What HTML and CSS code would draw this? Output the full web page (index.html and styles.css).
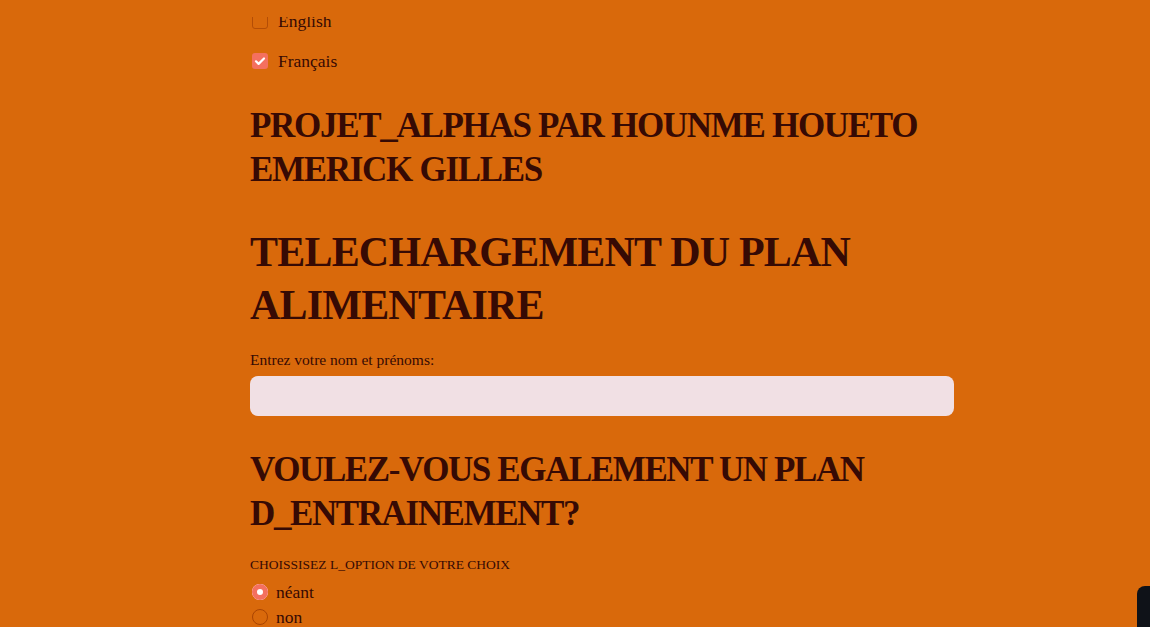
FILE: index.html
```html
<!DOCTYPE html>
<html lang="fr">
<head>
<meta charset="utf-8">
<title>Projet Alphas</title>
<link rel="stylesheet" href="styles.css">
</head>
<body>
<div class="top-cover"></div>
<main class="page">
  <div class="langs">
    <label class="check-row"><span class="box"></span><span>English</span></label>
    <label class="check-row"><span class="box checked"><svg viewBox="0 0 16 16" width="16" height="16"><path d="M4 8.3l2.6 2.6L12 5.5" fill="none" stroke="#fff" stroke-width="2.2" stroke-linecap="round" stroke-linejoin="round"/></svg></span><span>Français</span></label>
  </div>
  <h2 class="title">PROJET_ALPHAS PAR HOUNME HOUETO EMERICK GILLES</h2>
  <h1 class="main-title">TELECHARGEMENT DU PLAN ALIMENTAIRE</h1>
  <label class="field-label">Entrez votre nom et prénoms:</label>
  <div class="input"></div>
  <h2 class="title second">VOULEZ-VOUS EGALEMENT UN PLAN D_ENTRAINEMENT?</h2>
  <p class="option-label">CHOISSISEZ L_OPTION DE VOTRE CHOIX</p>
  <div class="radios">
    <label class="radio-row"><span class="radio on"></span><span>néant</span></label>
    <label class="radio-row"><span class="radio"></span><span>non</span></label>
  </div>
</main>
<div class="fab"></div>
</body>
</html>
```
FILE: styles.css
```css
html, body {
  margin: 0;
  padding: 0;
  height: 100%;
  overflow: hidden;
}
body {
  background: #d9690b;
  color: #360a04;
  font-family: "Liberation Serif", "Times New Roman", serif;
  position: relative;
}
.top-cover {
  position: absolute;
  left: 0;
  top: 0;
  width: 100%;
  height: 17px;
  background: #d9690b;
  z-index: 2;
}
.page {
  width: 704px;
  margin-left: 250px;
  padding-top: 10px;
}
.langs {
  display: flex;
  flex-direction: column;
  gap: 18px;
}
.check-row {
  display: flex;
  align-items: center;
  gap: 10px;
  font-size: 17.5px;
  height: 22px;
  padding-left: 2px;
}
.box {
  width: 16px;
  height: 16px;
  box-sizing: border-box;
  border: 1.5px solid #b44d05;
  border-radius: 3px;
  display: flex;
}
.box.checked {
  background: #f4705f;
  border: none;
}
.title {
  font-size: 35px;
  font-weight: 600;
  line-height: 44px;
  letter-spacing: -1.3px;
  margin: 32px 0 0;
}
.main-title {
  font-size: 42px;
  font-weight: 700;
  line-height: 53px;
  letter-spacing: -0.8px;
  margin: 34px 0 0;
}
.field-label {
  display: block;
  font-size: 15.5px;
  margin-top: 19px;
  line-height: 18px;
}
.input {
  margin-top: 7px;
  height: 40px;
  background: #f1e0e4;
  border-radius: 8px;
}
.title.second {
  margin-top: 32px;
  letter-spacing: -1.4px;
}
.option-label {
  font-size: 13.5px;
  margin: 20px 0 0;
  line-height: 18px;
}
.radios {
  margin-top: 8px;
  display: flex;
  flex-direction: column;
  gap: 5px;
}
.radio-row {
  display: flex;
  align-items: center;
  gap: 8px;
  font-size: 17.5px;
  height: 20px;
  padding-left: 2px;
}
.radio {
  width: 16px;
  height: 16px;
  box-sizing: border-box;
  border-radius: 50%;
  border: 1.5px solid #a94402;
}
.radio.on {
  border: none;
  background: #f4705f;
  box-shadow: inset 0 0 0 5px #f4705f, inset 0 0 0 8px #fff;
}
.fab {
  position: absolute;
  left: 1137px;
  top: 586px;
  width: 40px;
  height: 60px;
  background: #0f1218;
  border-radius: 8px 0 0 0;
}
```
